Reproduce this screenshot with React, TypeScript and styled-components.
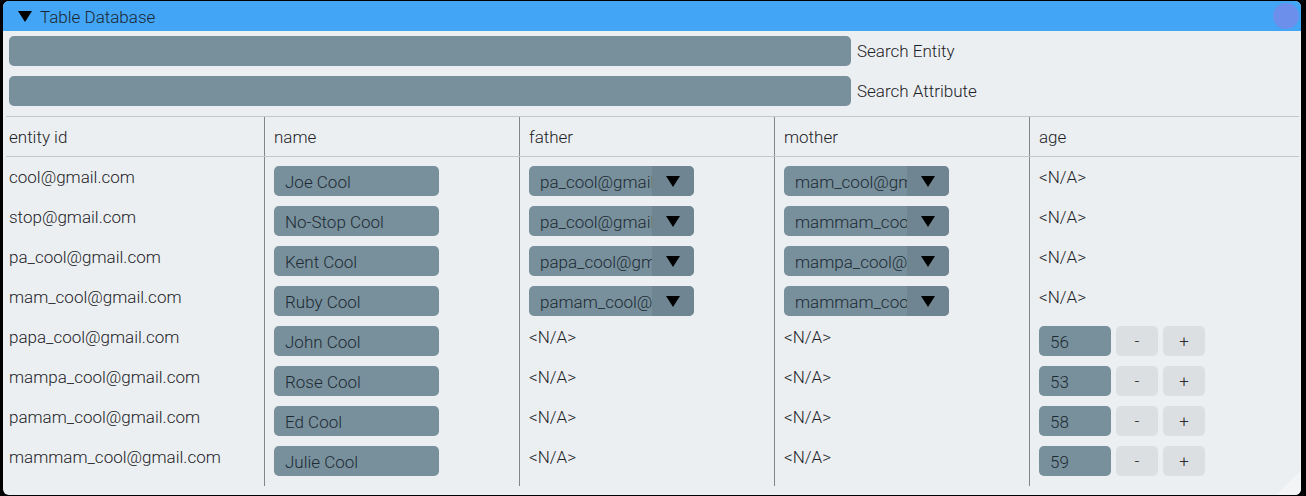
import { FC } from "react";
import styled, { createGlobalStyle } from "styled-components";

interface PersonRow {
    id: string,
    name: string,
    father?: string,
    mother?: string,
    age?: number
}

const rows: PersonRow[] = [
    { id: "cool@gmail.com", name: "Joe Cool", father: "pa_cool@gmail.com", mother: "mam_cool@gmail.com" },
    { id: "stop@gmail.com", name: "No-Stop Cool", father: "pa_cool@gmail.com", mother: "mammam_cool@gmail.com" },
    { id: "pa_cool@gmail.com", name: "Kent Cool", father: "papa_cool@gmail.com", mother: "mampa_cool@gmail.com" },
    { id: "mam_cool@gmail.com", name: "Ruby Cool", father: "pamam_cool@gmail.com", mother: "mammam_cool@gmail.com" },
    { id: "papa_cool@gmail.com", name: "John Cool", age: 56 },
    { id: "mampa_cool@gmail.com", name: "Rose Cool", age: 53 },
    { id: "pamam_cool@gmail.com", name: "Ed Cool", age: 58 },
    { id: "mammam_cool@gmail.com", name: "Julie Cool", age: 59 },
];

const columns = ["entity id", "name", "father", "mother", "age"];

const Triangle: FC = () => (
    <svg width="14" height="11" viewBox="0 0 14 11">
        <polygon points="0,0 14,0 7,11" fill="#000" />
    </svg>
);

const RefSelect: FC<{ value: string }> = ({ value }) => (
    <SelectBox>
        <span className="value">{value}</span>
        <span className="arrow"><Triangle /></span>
    </SelectBox>
);

const AgeField: FC<{ age: number }> = ({ age }) => (
    <AgeGroup>
        <Field width={72} readOnly value={String(age)} />
        <StepButton>-</StepButton>
        <StepButton>+</StepButton>
    </AgeGroup>
);

export default function App() {
    return (
        <>
            <GlobalStyle />
            <Panel>
                <TitleBar>
                    <Triangle />
                    <span className="title">Table Database</span>
                    <span className="dot" />
                </TitleBar>
                <Searches>
                    <SearchRow>
                        <Field width={842} readOnly value="" />
                        <span>Search Entity</span>
                    </SearchRow>
                    <SearchRow>
                        <Field width={842} readOnly value="" />
                        <span>Search Attribute</span>
                    </SearchRow>
                </Searches>
                <Table>
                    <HeadRow>
                        {columns.map((c) => <Cell key={c}>{c}</Cell>)}
                    </HeadRow>
                    {rows.map((r) => (
                        <BodyRow key={r.id}>
                            <Cell>{r.id}</Cell>
                            <Cell $top><Field width={165} readOnly value={r.name} /></Cell>
                            {r.father ? <Cell $top><RefSelect value={r.father} /></Cell> : <Cell>{"<N/A>"}</Cell>}
                            {r.mother ? <Cell $top><RefSelect value={r.mother} /></Cell> : <Cell>{"<N/A>"}</Cell>}
                            {r.age === undefined ? <Cell>{"<N/A>"}</Cell> : <Cell $top><AgeField age={r.age} /></Cell>}
                        </BodyRow>
                    ))}
                    <TailRow>
                        {columns.map((c) => <Cell key={c} />)}
                    </TailRow>
                </Table>
                <Grip />
            </Panel>
        </>
    );
}

const GlobalStyle = createGlobalStyle`
    html, body {
        margin: 0;
        background: #000000;
    }
    body {
        font-family: Roboto, "Liberation Sans", sans-serif;
        font-size: 17px;
        font-weight: 300;
        color: #1c2328;
    }
    * {
        box-sizing: border-box;
    }
`

const Panel = styled.div`
    position: relative;
    width: 1298px;
    height: 494px;
    margin: 1px 0 0 3px;
    background-color: #eceff1;
    border-radius: 6px;
    overflow: hidden;
`

const TitleBar = styled.div`
    height: 30px;
    display: flex;
    align-items: center;
    padding: 0 2px 0 15px;
    background-color: #42a5f5;
    color: #1b2631;

    svg {
        margin-top: 1px;
    }

    .title {
        margin-left: 8px;
        padding-top: 1px;
    }

    .dot {
        margin-left: auto;
        width: 26px;
        height: 26px;
        border-radius: 50%;
        background-color: #6b8fea;
    }
`

const Searches = styled.div`
    display: flex;
    flex-direction: column;
    gap: 10px;
    padding: 5px 0 10px 6px;
`

const SearchRow = styled.div`
    display: flex;
    align-items: center;
    gap: 6px;
`

const Field = styled.input<{ width: number }>`
    width: ${(p) => p.width}px;
    height: 30px;
    padding: 1px 11px 0;
    border: none;
    border-radius: 5px;
    outline: none;
    background-color: #78909c;
    font-family: inherit;
    font-size: 17px;
    font-weight: 300;
    color: #1d2a33;
`

const Table = styled.div`
    margin: 0 2px 0 3px;
    border-top: 1px solid #c3c7ca;
`

const HeadRow = styled.div`
    display: grid;
    grid-template-columns: 258px 255px 255px 255px 1fr;
    height: 40px;
    border-bottom: 1px solid #c3c7ca;
`

const BodyRow = styled.div`
    display: grid;
    grid-template-columns: 258px 255px 255px 255px 1fr;
    height: 40px;
`

const TailRow = styled(BodyRow)`
    height: 9px;
`

const Cell = styled.div<{ $top?: boolean }>`
    display: flex;
    align-items: ${(p) => (p.$top ? "flex-start" : "center")};
    padding: ${(p) => (p.$top ? "9px" : "0")} 9px 0 9px;
    border-left: 1px solid #858585;
    white-space: nowrap;

    &:first-child {
        border-left: none;
        padding-left: 3px;
    }
`

const SelectBox = styled.div`
    width: 165px;
    height: 30px;
    display: flex;
    border-radius: 5px;
    overflow: hidden;
    background-color: #78909c;
    color: #1d2a33;

    .value {
        width: 123px;
        padding: 1px 0 0 11px;
        overflow: hidden;
        line-height: 30px;
    }

    .arrow {
        width: 42px;
        display: flex;
        align-items: center;
        justify-content: center;
        background-color: #6f8592;
    }
`

const AgeGroup = styled.div`
    display: flex;
    gap: 5px;
`

const StepButton = styled.button`
    width: 42px;
    height: 30px;
    border: none;
    border-radius: 5px;
    background-color: #dcdfe2;
    font-family: inherit;
    font-size: 17px;
    font-weight: 300;
    color: #2a2a2a;
    padding: 0;
`

const Grip = styled.div`
    position: absolute;
    right: 0;
    bottom: 0;
    width: 24px;
    height: 24px;
    background: linear-gradient(135deg, transparent 50%, #f2f4f6 50%);
`
